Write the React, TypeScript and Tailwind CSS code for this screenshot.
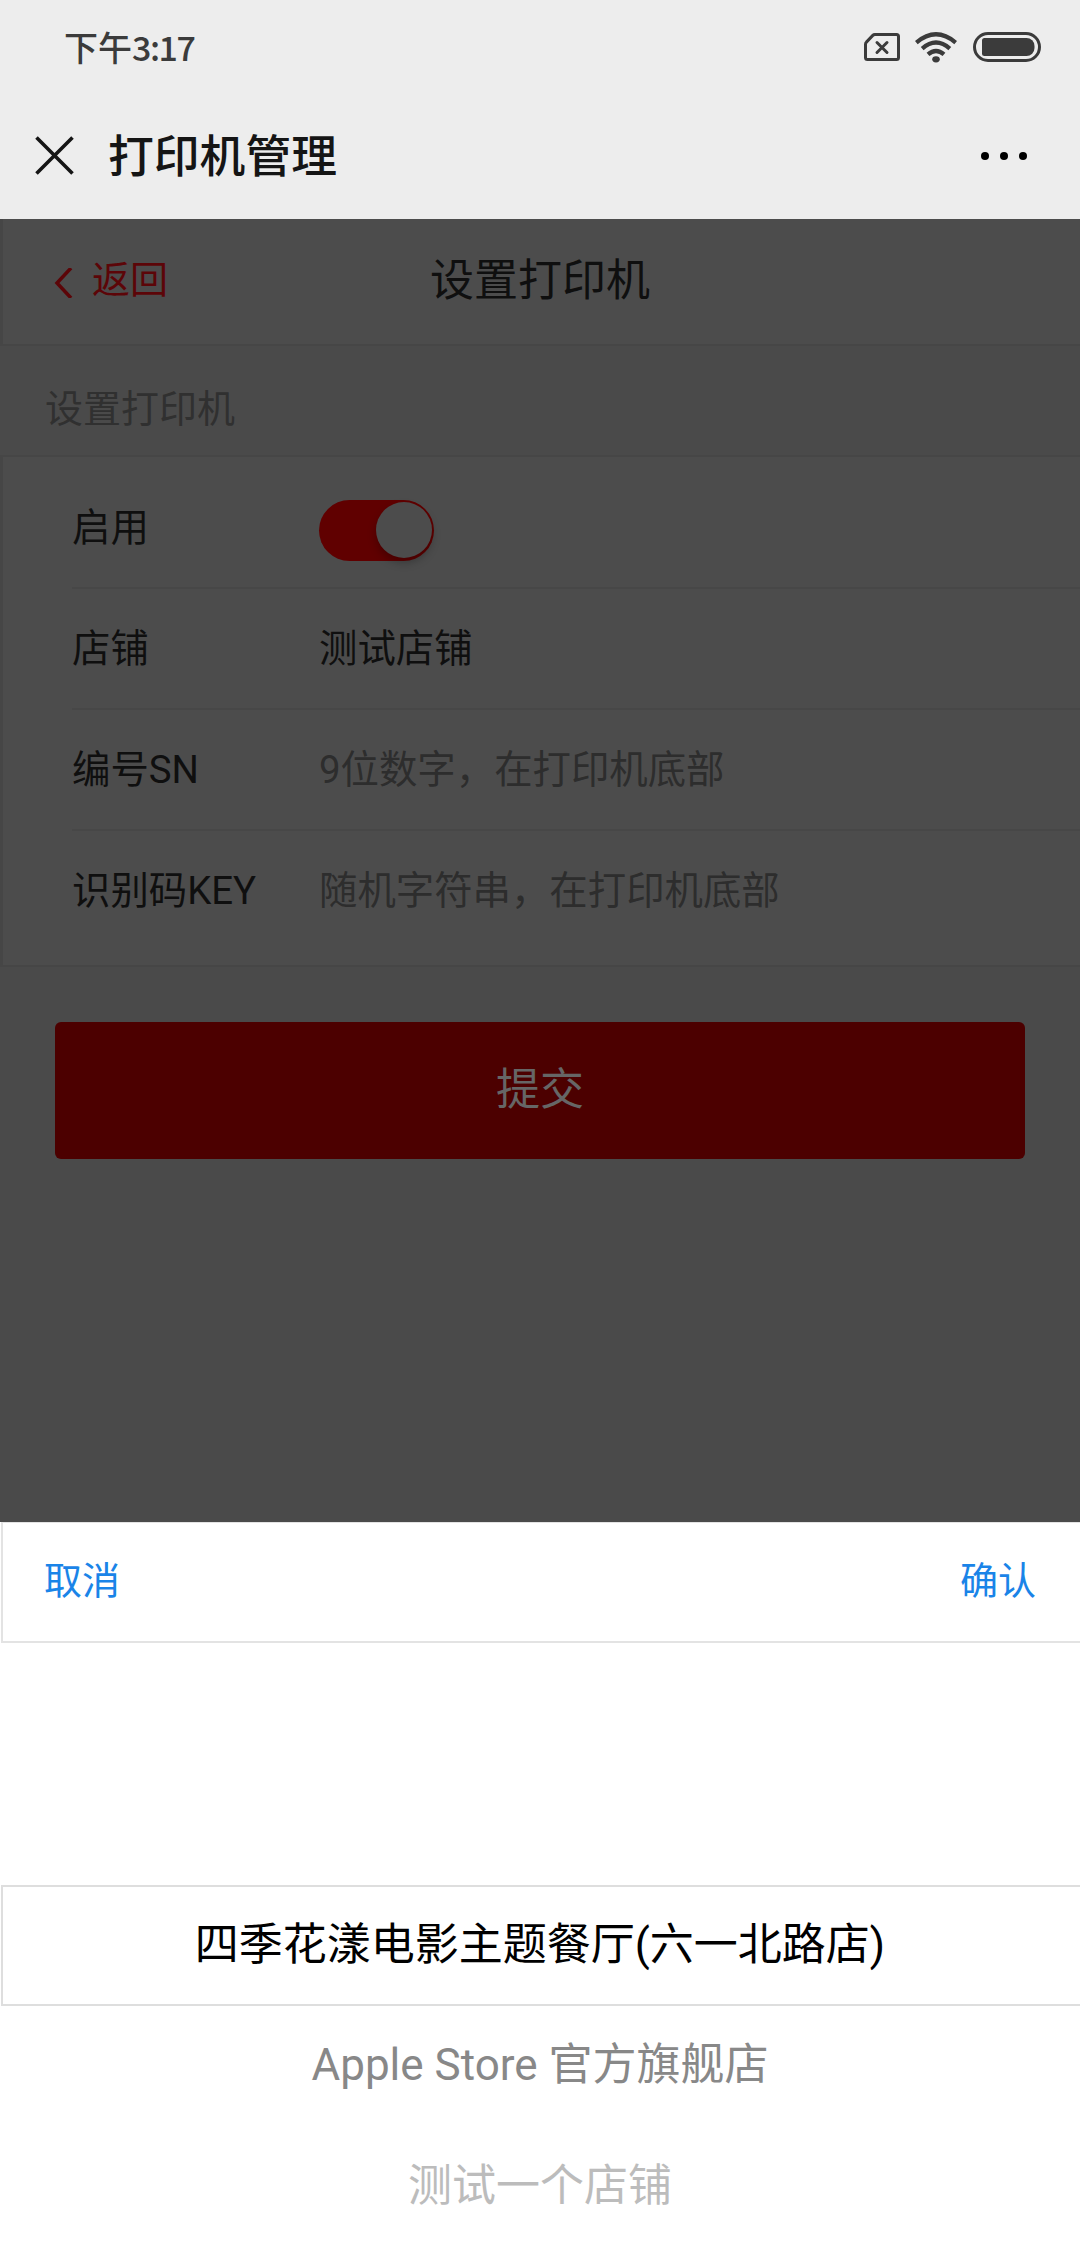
import type { ReactNode } from "react";

function StatusBar() {
  return (
    <div className="flex h-24 items-center justify-between pb-[2px] pl-16 pr-[39px] text-[#3b3b3b]">
      <div className="flex items-center font-['Noto_Sans_CJK_SC',sans-serif] text-[34px] leading-none font-medium">
        <span>下午</span>
        <span className="tracking-[-1.5px]">3:17</span>
      </div>
      <div className="flex items-center">
        <svg width="36" height="28" viewBox="0 0 36 28" fill="none" stroke="currentColor">
          <path
            d="M11 1.500H32.500a2 2 0 0 1 2 2V24.500a2 2 0 0 1-2 2H3.500a2 2 0 0 1-2-2V11.200a3 3 0 0 1 .9-2.100L8.800 2.400A3 3 0 0 1 11 1.500Z"
            strokeWidth="3"
          />
          <path d="M13 9.500l10 10M23 9.500l-10 10" strokeWidth="3" strokeLinecap="round" />
        </svg>
        <svg className="ml-[15px]" width="42" height="31" viewBox="0 0 42 31" fill="none" stroke="currentColor">
          <g strokeWidth="4.300">
            <path d="M1.300 10.600Q21-6 40.700 10.600" />
            <path d="M7.200 16.600Q21 4.600 34.800 16.600" />
            <path d="M13 22.400Q21 15.600 29 22.400" />
          </g>
          <ellipse cx="21" cy="27.300" rx="3.800" ry="3.100" fill="currentColor" stroke="none" />
        </svg>
        <svg className="ml-4" width="68" height="30" viewBox="0 0 68 30">
          <rect x="1.500" y="1.500" width="65" height="27" rx="13.500" fill="none" stroke="currentColor" strokeWidth="3" />
          <path
            d="M11.500 6H53.500a8 8 0 0 1 8 8v2a8 8 0 0 1-8 8H11.500a2.500 2.500 0 0 1-2.500-2.500V8.500A2.500 2.500 0 0 1 11.500 6Z"
            fill="currentColor"
          />
        </svg>
      </div>
    </div>
  );
}

function TitleBar() {
  return (
    <div className="flex h-[123px] items-center pb-[3px] pl-[35px] pr-[53px]">
      <svg className="-mt-[2px]" width="39" height="39" viewBox="0 0 39 39" stroke="#151515" strokeWidth="3.600">
        <path d="M1.500 1.500L37.500 37.500M37.500 1.500L1.500 37.500" />
      </svg>
      <h1 className="ml-[34px] flex-1 pt-1 text-[45.8px] leading-none font-medium text-[#151515]">打印机管理</h1>
      <div className="flex gap-[11px]">
        <i className="size-2 rounded-full bg-black" />
        <i className="size-2 rounded-full bg-black" />
        <i className="size-2 rounded-full bg-black" />
      </div>
    </div>
  );
}

function FormRow({ label, last, children }: { label: string; last?: boolean; children: ReactNode }) {
  return (
    <div
      className={
        last
          ? "flex h-[121px] items-center pb-px"
          : "flex h-[121px] items-center border-b-2 border-[#474747] pt-[2px]"
      }
    >
      <div className="w-[247px] text-[#0f0f0f]">{label}</div>
      {children}
    </div>
  );
}

function PickerItem({ text, tone }: { text: string; tone: string }) {
  return <div className={`flex h-[121px] items-center justify-center ${tone}`}>{text}</div>;
}

export default function App() {
  return (
    <div className="flex h-[2248px] w-[1080px] flex-col overflow-hidden bg-[#4a4a4a] font-[Roboto,'Noto_Sans_CJK_SC',sans-serif] text-[38.4px] leading-none">
      <header className="h-[219px] shrink-0 bg-[#ededed]">
        <StatusBar />
        <TitleBar />
      </header>

      <main className="flex flex-1 flex-col">
        <nav className="grid h-[127px] grid-cols-[1fr_auto_1fr] items-center border-b-2 border-l-[3px] border-[#464646] bg-[#4c4c4c] pb-[3px] pl-[50px]">
          <div className="flex items-center text-[38px] text-[#5c0508]">
            <svg className="mt-[5px]" width="20" height="30" viewBox="0 0 20 30" fill="none" stroke="currentColor" strokeWidth="3.500">
              <path d="M18 0L4 15L18 30" />
            </svg>
            <span className="ml-[19px]">返回</span>
          </div>
          <h2 className="-ml-[53px] pt-px text-[44px] text-[#0f0f0f]">设置打印机</h2>
        </nav>

        <div className="flex h-[109px] items-center pl-[45px] pt-4 text-[38px] text-[#303030]">设置打印机</div>

        <section className="h-[512px] border-y-2 border-l-[3px] border-[#464646] bg-[#4c4c4c] pl-[69px] pt-[11px]">
          <FormRow label="启用">
            <div className="mt-[3px] flex h-[61px] w-[115px] items-center justify-end rounded-full bg-[#600000] pr-[2px]">
              <div className="size-[56px] rounded-full bg-[#4c4c4c] shadow-[0_5px_8px_rgba(0,0,0,0.25)]" />
            </div>
          </FormRow>
          <FormRow label="店铺">
            <div className="text-[#0f0f0f]">测试店铺</div>
          </FormRow>
          <FormRow label="编号SN">
            <div className="text-[#2d2d2d]">9位数字，在打印机底部</div>
          </FormRow>
          <FormRow label="识别码KEY" last>
            <div className="text-[#2d2d2d]">随机字符串，在打印机底部</div>
          </FormRow>
        </section>

        <button className="mx-[55px] mt-[55px] flex h-[137px] items-center justify-center rounded-md bg-[#4c0000] pb-px text-[44px] text-[#666]">
          提交
        </button>
      </main>

      <section className="h-[726px] shrink-0 bg-white">
        <div className="ml-px flex h-[121px] items-center justify-between border-b-2 border-l-2 border-t border-[#e3e3e3] pb-[2px] pl-[41px] pr-[44px] text-[38px] text-[#1a84e8]">
          <button>取消</button>
          <button>确认</button>
        </div>
        <div className="pt-[242px] text-[44px]">
          <div className="ml-px border-y-2 border-l-2 border-[#dedede] pr-[3px]">
            <div className="-my-[2px]">
              <PickerItem text="四季花漾电影主题餐厅(六一北路店)" tone="pb-px text-black" />
            </div>
          </div>
          <PickerItem text="Apple Store 官方旗舰店" tone="pb-[3px] text-[#888]" />
          <PickerItem text="测试一个店铺" tone="pb-[3px] text-[#bcbcbc]" />
        </div>
      </section>
    </div>
  );
}
